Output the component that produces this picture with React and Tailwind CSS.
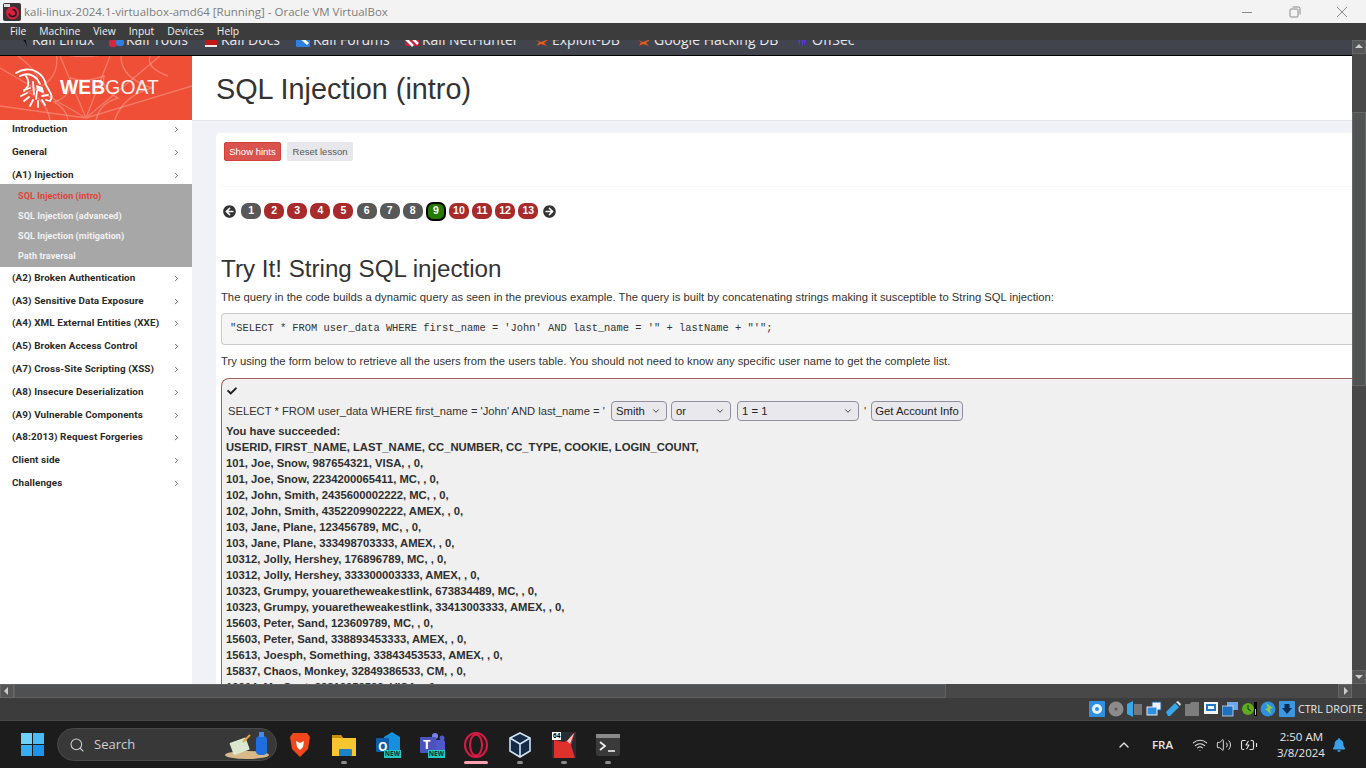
import { ChevronRight, ChevronDown, ChevronUp, Search, Wifi, Volume2, BatteryCharging } from 'lucide-react';
import { FaArrowCircleLeft, FaArrowCircleRight, FaCheck, FaBell } from 'react-icons/fa';

const menus = ['File', 'Machine', 'View', 'Input', 'Devices', 'Help'];

const bookmarks = [
  { label: 'Kali Linux', width: 94, kind: 'dragon' },
  { label: 'Kali Tools', width: 95, kind: 'tools' },
  { label: 'Kali Docs', width: 92, kind: 'docs' },
  { label: 'Kali Forums', width: 109, kind: 'forums' },
  { label: 'Kali NetHunter', width: 130, kind: 'hunter' },
  { label: 'Exploit-DB', width: 102, kind: 'spider' },
  { label: 'Google Hacking DB', width: 158, kind: 'spider' },
  { label: 'OffSec', width: 70, kind: 'offsec' },
];

const groupsBefore = ['Introduction', 'General', '(A1) Injection'];
const subItems = ['SQL Injection (intro)', 'SQL Injection (advanced)', 'SQL Injection (mitigation)', 'Path traversal'];
const groupsAfter = [
  '(A2) Broken Authentication',
  '(A3) Sensitive Data Exposure',
  '(A4) XML External Entities (XXE)',
  '(A5) Broken Access Control',
  '(A7) Cross-Site Scripting (XSS)',
  '(A8) Insecure Deserialization',
  '(A9) Vulnerable Components',
  '(A8:2013) Request Forgeries',
  'Client side',
  'Challenges',
];

const pages = [
  { n: 1, kind: 'grey' }, { n: 2, kind: 'red' }, { n: 3, kind: 'red' }, { n: 4, kind: 'red' },
  { n: 5, kind: 'red' }, { n: 6, kind: 'grey' }, { n: 7, kind: 'grey' }, { n: 8, kind: 'grey' },
  { n: 9, kind: 'current' }, { n: 10, kind: 'red' }, { n: 11, kind: 'red' }, { n: 12, kind: 'red' }, { n: 13, kind: 'red' },
];

const results = [
  '101, Joe, Snow, 987654321, VISA, , 0,',
  '101, Joe, Snow, 2234200065411, MC, , 0,',
  '102, John, Smith, 2435600002222, MC, , 0,',
  '102, John, Smith, 4352209902222, AMEX, , 0,',
  '103, Jane, Plane, 123456789, MC, , 0,',
  '103, Jane, Plane, 333498703333, AMEX, , 0,',
  '10312, Jolly, Hershey, 176896789, MC, , 0,',
  '10312, Jolly, Hershey, 333300003333, AMEX, , 0,',
  '10323, Grumpy, youaretheweakestlink, 673834489, MC, , 0,',
  '10323, Grumpy, youaretheweakestlink, 33413003333, AMEX, , 0,',
  '15603, Peter, Sand, 123609789, MC, , 0,',
  '15603, Peter, Sand, 338893453333, AMEX, , 0,',
  '15613, Joesph, Something, 33843453533, AMEX, , 0,',
  '15837, Chaos, Monkey, 32849386533, CM, , 0,',
  '19204, Mr, Goat, 33812953533, VISA, , 0,',
];

function VboxLogo() {
  return (
    <svg width="18" height="18" viewBox="0 0 18 18">
      <rect width="18" height="18" rx="2" fill="#3a3236" />
      <circle cx="9.5" cy="10" r="6.5" fill="#d8203f" />
      <path d="M9.5 6.5a3.5 3.5 0 1 1-3.4 4.2" fill="none" stroke="#1c1c1c" strokeWidth="1.6" />
      <rect x="1" y="1" width="6" height="3" fill="#ddd" />
    </svg>
  );
}

function WindowButtons() {
  return (
    <div className="ml-auto flex items-center text-[#8a8a8a]">
      <svg width="12" height="12" viewBox="0 0 12 12" className="mr-[36px]"><path d="M1 6.5h10" stroke="currentColor" /></svg>
      <svg width="12" height="12" viewBox="0 0 12 12" className="mr-[35px]">
        <rect x="1" y="3" width="8" height="8" rx="1" fill="none" stroke="currentColor" />
        <path d="M3.5 1h6a1.5 1.5 0 0 1 1.5 1.5v6" fill="none" stroke="currentColor" />
      </svg>
      <svg width="12" height="12" viewBox="0 0 12 12" className="mr-[18px]"><path d="M1 1l10 10M11 1L1 11" stroke="currentColor" /></svg>
    </div>
  );
}

// only the lower half of these shows, the menu bar covers the rest
function BookmarkIcon({ kind }) {
  return (
    <svg width="16" height="16" viewBox="0 0 16 16" className="shrink-0">
      {kind === 'dragon' && <path d="M1 6c5-2 9-1 11 3l1 6-2-5c-2-3-5-4-10-4z" fill="#0b0b0b" />}
      {kind === 'tools' && (
        <>
          <rect x="1" y="7" width="8" height="8" rx="3" fill="#d7263d" />
          <rect x="8" y="7" width="8" height="7" rx="3" fill="#2f80e0" />
        </>
      )}
      {kind === 'docs' && (
        <>
          <rect x="2" y="1" width="12" height="13" fill="#c01818" />
          <rect x="2" y="13" width="12" height="2" fill="#e8e8e8" />
        </>
      )}
      {kind === 'forums' && (
        <>
          <rect x="1" y="2" width="14" height="13" rx="1" fill="#2f80e0" />
          <path d="M3 3l10 9" stroke="#fff" strokeWidth="3" />
        </>
      )}
      {kind === 'hunter' && (
        <>
          <rect x="1" y="2" width="14" height="12" fill="#c8203a" />
          <path d="M1 6l8 8M6 4l8 8" stroke="#fff" strokeWidth="2.5" />
        </>
      )}
      {kind === 'spider' && <path d="M1 8l6 2 8-3-5 4 3 3-6-2-4 2 2-4z" fill="#e8591a" />}
      {kind === 'offsec' && <path d="M3 6l3 8V4zM7 6l1.5 9L10 6zM13 6l-3 8V4z" fill="#5536e0" />}
    </svg>
  );
}

function WebgoatBanner() {
  return (
    <div className="relative flex h-[64px] w-[192px] shrink-0 items-center overflow-hidden bg-[#ef4e37]">
      <svg width="192" height="64" viewBox="0 0 192 64" className="absolute inset-0" fill="none" stroke="#f9a596" strokeOpacity="0.5" strokeWidth="1.4">
        <path d="M86 62L60 0M86 62L110 0M86 62L0 12M86 62L160 0M86 62L192 30M86 62L0 50" />
        <path d="M70 22q16 5 34-2q-3 14 14 22q-18 5-22 22M70 22q3 18-16 24q12 6 14 18" />
        <path d="M56 -4q28 10 66-2q-6 26 30 38q-30 8-38 34M56 -4q6 30-28 40q18 8 22 28" />
        <path d="M18 0q18 14 20 22M150 0q-4 12 18 20" />
      </svg>
      <svg width="40" height="42" viewBox="0 0 40 42" className="relative ml-[15px]" fill="none" stroke="#fff" strokeWidth="1.8" strokeLinecap="round" strokeLinejoin="round">
        <path d="M1 6C7 2 16 1 22 5c5 3 8 8 9 13l5 9c1 3 1 5-1 7l-4-1" />
        <path d="M5 9c6-3 12-2 17 3l3 5" />
        <path d="M11 9c2 3 3 6 2 10l-4 5" />
        <path d="M15 21l-6 2M12 26l-6 3M14 30l-5 4M18 33l-3 6M23 34v6M27 33l3 5" />
        <path d="M18 15l1 12M22 24l-1 8" />
        <path d="M22 19l5 2 1 4-5-2z" fill="#fff" />
        <path d="M27 29l6-1" />
      </svg>
      <span className="relative ml-[5px] font-['Liberation_Sans',sans-serif] text-[19.3px] leading-none text-white">
        <span className="font-bold">WEB</span>
        <span className="font-light opacity-90">GOAT</span>
      </span>
    </div>
  );
}

function Sidebar() {
  const group = label => (
    <div key={label} className="flex h-[22.8px] items-center justify-between pl-3 pr-[11px] text-[9.9px] font-bold text-[#2b2b2b]">
      <span>{label}</span>
      <ChevronRight size={9} strokeWidth={2} className="text-[#444]" />
    </div>
  );
  return (
    <aside className="flex w-[192px] shrink-0 flex-col bg-white font-['Roboto','Liberation_Sans',sans-serif] tracking-[0.1px]">
      <WebgoatBanner />
      <div className="-mt-[1.5px]">
        {groupsBefore.map(group)}
        <div className="-mt-[2.5px] flex h-[82.5px] flex-col justify-center bg-[#a7a7a7] pl-[18px] pt-[2px] text-[9px] font-bold text-[#f2f2f2]">
          {subItems.map((item, i) => (
            <div key={item} className={`flex h-[20.4px] items-center ${i === 0 ? 'text-[#e0433b]' : ''}`}>{item}</div>
          ))}
        </div>
        {groupsAfter.map(group)}
      </div>
    </aside>
  );
}

function Pager() {
  return (
    <div className="flex h-[20px] items-center gap-[3.1px]">
      <FaArrowCircleLeft size={13} className="mr-[2px] text-[#333]" />
      {pages.map(p => (
        <div
          key={p.n}
          className={`flex w-[20px] items-center justify-center rounded-[7px] text-[10.5px] font-bold text-white ${
            p.kind === 'grey' ? 'h-[16px] bg-[#585858]' : p.kind === 'red' ? 'h-[16px] bg-[#a82a2a]' : 'h-[19px] border-2 border-black bg-[#267a00]'
          }`}
        >
          {p.n}
        </div>
      ))}
      <FaArrowCircleRight size={13} className="ml-[2px] text-[#333]" />
    </div>
  );
}

function NativeSelect({ value, width }) {
  return (
    <div
      className="flex h-[20px] items-center justify-between rounded-[4px] border border-[#8f8f9d] bg-[#e9e9ed] pl-[4px] pr-[5px] text-[#222]"
      style={{ width }}
    >
      <span>{value}</span>
      <ChevronDown size={10} strokeWidth={2} />
    </div>
  );
}

function AttackBox() {
  return (
    <div className="mt-[9px] rounded-tl-[8px] border border-r-0 border-b-0 border-[#a5605f] bg-[#f0f0f0] pl-[4px] text-[#2f2f2f]">
      <FaCheck size={10} className="ml-[1px] mt-[7px] text-[#222]" />
      <div className="ml-[2px] mt-[5px] flex h-[20px] items-center text-[11.3px] text-[#333]">
        <span className="w-[383px] shrink-0 whitespace-nowrap text-[11.2px]">SELECT * FROM user_data WHERE first_name = 'John' AND last_name = '</span>
        <NativeSelect value="Smith" width={56} />
        <div className="w-[4px]" />
        <NativeSelect value="or" width={60} />
        <div className="w-[6px]" />
        <NativeSelect value="1 = 1" width={122} />
        <span className="ml-[5px] w-[7px]">'</span>
        <div className="flex h-[20px] w-[92px] items-center justify-center rounded-[4px] border border-[#8f8f9d] bg-[#e9e9ed] text-[#222]">Get Account Info</div>
      </div>
      <div className="mt-[2px] text-[11.25px] font-bold leading-[16px]">
        <div>You have succeeded:</div>
        <div>USERID, FIRST_NAME, LAST_NAME, CC_NUMBER, CC_TYPE, COOKIE, LOGIN_COUNT,</div>
        {results.map(r => <div key={r}>{r}</div>)}
      </div>
    </div>
  );
}

function Lesson() {
  return (
    <main className="min-w-0 flex-1 overflow-hidden bg-[#f1f2f8] font-['Liberation_Sans',sans-serif]">
      <header className="flex h-[65px] items-center border-b border-[#e6e6ea] bg-white pl-[24px] pt-[3px] text-[28.8px] text-[#333]">
        SQL Injection (intro)
      </header>
      <div className="ml-[24px] mt-[12px] rounded-tl-[4px] bg-white pl-[5px] pb-10">
        <div className="flex gap-[6px] pl-[3px] pt-[9px] text-[9.5px]">
          <div className="flex h-[19px] w-[57px] items-center justify-center rounded-[2px] border border-[#d43f3a] bg-[#d9534f] pt-px text-white">Show hints</div>
          <div className="flex h-[19px] w-[66px] items-center justify-center rounded-[2px] bg-[#e8e8ec] pt-px text-[#555]">Reset lesson</div>
        </div>
        <div className="mt-[25px] h-px bg-[#f8f8f8]" />
        <div className="mt-[14px] pl-[2px]"><Pager /></div>
        <h1 className="mt-[32px] text-[24.2px] leading-[32px] text-[#333]">Try It! String SQL injection</h1>
        <p className="mt-[4px] text-[11.25px] leading-[16px] text-[#333]">
          The query in the code builds a dynamic query as seen in the previous example. The query is built by concatenating strings making it susceptible to String SQL injection:
        </p>
        <pre className="mt-[8px] flex h-[32px] items-center rounded-l-[4px] border border-r-0 border-[#ccc] bg-[#f5f5f5] pl-[8px] font-['Liberation_Mono',monospace] text-[10.4px] text-[#333]">
          "SELECT * FROM user_data WHERE first_name = 'John' AND last_name = '" + lastName + "'";
        </pre>
        <p className="mt-[8px] text-[11.25px] leading-[16px] text-[#333]">
          Try using the form below to retrieve all the users from the users table. You should not need to know any specific user name to get the complete list.
        </p>
        <AttackBox />
      </div>
    </main>
  );
}

function ScrollArrow({ dir }) {
  const d = { up: 'M3 8l4-4 4 4z', down: 'M3 5l4 4 4-4z', left: 'M8 3L4 7l4 4z', right: 'M6 3l4 4-4 4z' }[dir];
  return (
    <div className="flex h-[14px] w-[14px] shrink-0 items-center justify-center border border-[#666] bg-[#555]">
      <svg width="14" height="14" viewBox="0 0 14 14" className="shrink-0"><path d={d} fill="#ccc" /></svg>
    </div>
  );
}

function StatusIcons() {
  return (
    <div className="ml-auto flex items-center gap-[3px]">
      <svg width="16" height="16" viewBox="0 0 16 16"><rect width="16" height="16" rx="1" fill="#2f8fe0" /><circle cx="8" cy="8" r="5" fill="#e6f2fb" /><circle cx="8" cy="8" r="2" fill="#2f8fe0" /></svg>
      <svg width="16" height="16" viewBox="0 0 16 16"><circle cx="8" cy="8" r="7.5" fill="#8b8b8b" /><circle cx="8" cy="8" r="1.5" fill="#5a5a5a" /></svg>
      <svg width="16" height="16" viewBox="0 0 16 16"><path d="M0 3l6-3v16l-6-3z" fill="#39a7e8" /><rect x="7" y="3" width="8" height="11" fill="#777" /></svg>
      <svg width="16" height="16" viewBox="0 0 16 16"><rect x="6" y="1" width="9" height="8" fill="#f2f2f2" stroke="#1d5fa8" /><rect x="1" y="6" width="10" height="8" fill="#2f8fe0" stroke="#eee" /></svg>
      <svg width="16" height="16" viewBox="0 0 16 16"><path d="M1 11L10 2l4 4-9 9H3z" fill="#3aa6ea" /><path d="M11 1l2-1 3 3-1 2z" fill="#ddd" /></svg>
      <svg width="16" height="16" viewBox="0 0 16 16"><path d="M1 3h5l1-2h8v14H1z" fill="#7d7d7d" /></svg>
      <svg width="16" height="16" viewBox="0 0 16 16"><rect x="1" y="1" width="14" height="12" fill="#f3f3f3" /><rect x="3" y="3" width="10" height="7" fill="#1e78c8" /><rect x="5" y="5" width="6" height="3" fill="#f3f3f3" /></svg>
      <svg width="16" height="16" viewBox="0 0 16 16"><rect x="5" y="1" width="11" height="8" fill="#6fa8e8" /><rect x="0" y="5" width="11" height="10" fill="#1e70c0" stroke="#eee" strokeWidth="0.7" /></svg>
      <svg width="16" height="16" viewBox="0 0 16 16"><circle cx="7" cy="8" r="6" fill="#5faa1e" /><path d="M7 4v4l3 2" stroke="#14330a" fill="none" /><rect x="13" y="1" width="3" height="14" fill="#000" /><rect x="14" y="8" width="1" height="6" fill="#7dff00" /></svg>
      <svg width="16" height="16" viewBox="0 0 16 16"><circle cx="8" cy="8" r="7.5" fill="#2f8fe0" /><path d="M6 2l7 5-3 1 1 5-6-5 3-1z" fill="#8ccf3a" /></svg>
      <svg width="16" height="16" viewBox="0 0 16 16"><rect width="16" height="16" rx="1" fill="#3a97e0" /><path d="M5.5 3h5v4H13l-5 6-5-6h2.5z" fill="#0d2c55" /></svg>
      <span className="w-[68px] whitespace-nowrap font-['Open_Sans',sans-serif] text-[10.7px] text-[#e8e8e8]">CTRL DROITE</span>
    </div>
  );
}

function Taskbar() {
  const apps = [
    {
      key: 'brave',
      dot: false,
      icon: <svg width="22" height="26" viewBox="0 0 22 26"><path d="M4 1h14l3 4-2 12-8 8-8-8L1 5z" fill="#f1471d" /><path d="M7 9l4 2 4-2-1 6-3 3-3-3z" fill="#fff" /></svg>,
    },
    {
      key: 'files',
      dot: true,
      icon: <svg width="26" height="24" viewBox="0 0 26 24"><path d="M1 2h9l2 3h13v18H1z" fill="#f7c52e" /><path d="M1 2h9l2 3H1z" fill="#c98f10" /><rect x="8" y="16" width="13" height="7" rx="1" fill="#1c82c9" /></svg>,
    },
    {
      key: 'outlook',
      dot: false,
      icon: (
        <div className="relative h-[26px] w-[26px]">
          <svg width="26" height="26" viewBox="0 0 26 26"><path d="M9 5l8-5 8 5v16H9z" fill="#1490df" /><rect x="1" y="6" width="13" height="14" rx="1" fill="#0f5ca8" /></svg>
          <span className="absolute left-[3px] top-[6px] text-[12px] font-bold text-white">O</span>
          <span className="absolute bottom-0 right-0 bg-[#23c9c4] px-[1px] text-[6.5px] font-bold leading-[8px] text-[#10302f]">NEW</span>
        </div>
      ),
    },
    {
      key: 'teams',
      dot: false,
      icon: (
        <div className="relative h-[26px] w-[26px]">
          <svg width="26" height="26" viewBox="0 0 26 26"><circle cx="16" cy="4" r="3" fill="#7b83eb" /><circle cx="23" cy="6" r="2.5" fill="#5059c9" /><rect x="14" y="8" width="12" height="13" rx="2" fill="#5059c9" /><rect x="1" y="5" width="16" height="16" rx="1" fill="#4b53bc" /></svg>
          <span className="absolute left-[4px] top-[4px] text-[13px] font-bold leading-[16px] text-white">T</span>
          <span className="absolute bottom-0 right-0 bg-[#23c9c4] px-[1px] text-[6.5px] font-bold leading-[8px] text-[#10302f]">NEW</span>
        </div>
      ),
    },
    {
      key: 'opera',
      active: true,
      icon: <svg width="26" height="26" viewBox="0 0 26 26" fill="none" stroke="#d81b45" strokeWidth="2"><ellipse cx="13" cy="13" rx="11" ry="12" /><ellipse cx="13" cy="13" rx="6" ry="10.5" /></svg>,
    },
    {
      key: 'vbox',
      dot: true,
      icon: <svg width="24" height="26" viewBox="0 0 24 26"><path d="M12 1l10 5v13l-10 6-10-6V6z" fill="#152a45" stroke="#cfe3f5" strokeWidth="1.6" /><path d="M12 12L2 6M12 12l10-6M12 12v13" stroke="#cfe3f5" strokeWidth="1.6" /></svg>,
    },
    {
      key: 'cards',
      dot: true,
      icon: (
        <div className="relative h-[26px] w-[24px]">
          <svg width="24" height="26" viewBox="0 0 24 26"><rect width="24" height="26" fill="#2b2b33" /><path d="M2 8l10 2 4-2 7-8-4 13 4 13H2z" fill="#e0302c" /><path d="M15 9l7-8-4 11z" fill="#f6c9c4" /></svg>
          <span className="absolute left-0 top-0 bg-white px-[1px] text-[6.5px] font-bold leading-[8px] text-black">64</span>
        </div>
      ),
    },
    {
      key: 'terminal',
      dot: true,
      icon: <svg width="24" height="22" viewBox="0 0 24 22"><rect width="24" height="22" rx="2" fill="#3a3a3a" /><rect width="24" height="4" fill="#8a8a8a" /><path d="M4 8l5 4-5 4" stroke="#eee" strokeWidth="1.8" fill="none" /><path d="M12 17h7" stroke="#eee" strokeWidth="1.6" /></svg>,
    },
  ];

  return (
    <footer className="flex h-[48px] items-center border-t border-[#474747] bg-[#1c1c1c] font-['Open_Sans',sans-serif] text-[#e6e6e6]">
      <div className="ml-[21px] grid h-[23px] w-[23px] grid-cols-2 gap-px">
        <div className="bg-[#6fd2fb]" />
        <div className="bg-[#49bcf7]" />
        <div className="bg-[#35aef5]" />
        <div className="bg-[#1c94ee]" />
      </div>
      <div className="ml-[13px] flex h-[33px] w-[220px] items-center rounded-full border border-[#4a4a4a] bg-[#383838] pl-[11px] text-[13px] text-[#cfcfcf]">
        <Search size={16} strokeWidth={1.6} />
        <span className="ml-[9px]">Search</span>
        <svg width="48" height="30" viewBox="0 0 48 30" className="ml-auto mr-[5px]">
          <ellipse cx="24" cy="25" rx="22" ry="4" fill="#d8b98a" />
          <rect x="8" y="10" width="17" height="13" rx="1" fill="#dbe8cf" transform="rotate(-20 16 16)" />
          <path d="M20 12l7-7" stroke="#e8a53a" strokeWidth="2" />
          <rect x="33" y="6" width="11" height="19" rx="4" fill="#1e6ee0" />
          <rect x="36" y="2" width="5" height="5" fill="#3d8df0" />
        </svg>
      </div>
      <div className="ml-[1px] flex items-center">
        {apps.map(app => (
          <div key={app.key} className="relative flex h-[48px] w-[44px] items-center justify-center">
            {app.icon}
            {app.dot && <span className="absolute bottom-[5px] h-[3px] w-[6px] rounded-full bg-[#8c8c8c]" />}
            {app.active && <span className="absolute bottom-[5px] h-[3px] w-[24px] rounded-full bg-[#ffa0b0]" />}
          </div>
        ))}
      </div>
      <ChevronUp size={16} strokeWidth={2} className="ml-auto" />
      <span className="ml-[20px] text-[11.5px] font-semibold">FRA</span>
      <Wifi size={16} strokeWidth={1.6} className="ml-[19px]" />
      <Volume2 size={16} strokeWidth={1.4} className="ml-[8px]" />
      <BatteryCharging size={18} strokeWidth={1.5} className="ml-[8px]" />
      <div className="ml-[19px] w-[46px] whitespace-nowrap text-right text-[11.5px] leading-[16px]">
        <div>2:50 AM</div>
        <div>3/8/2024</div>
      </div>
      <FaBell size={14} className="ml-[9px] mr-[20px] text-[#3aa0ea]" />
    </footer>
  );
}

export default function App() {
  return (
    <div className="flex h-[768px] w-[1366px] flex-col overflow-hidden">
      <div className="flex h-[23px] shrink-0 items-center bg-[#f3f3f3] pl-[3px]">
        <VboxLogo />
        <span className="ml-[3px] font-['Open_Sans',sans-serif] text-[11.5px] text-[#7c7c7c]">kali-linux-2024.1-virtualbox-amd64 [Running] - Oracle VM VirtualBox</span>
        <WindowButtons />
      </div>
      <nav className="relative z-10 flex h-[17px] shrink-0 items-center gap-[13px] bg-[#3c3c3c] pl-[10px] font-['Open_Sans',sans-serif] text-[10.3px] text-[#f0f0f0]">
        {menus.map(m => <span key={m}>{m}</span>)}
      </nav>
      <div className="flex h-[644px] shrink-0">
        <div className="flex w-[1352px] flex-col">
          <div className="flex h-[16px] shrink-0 border-b border-black bg-[#42444d] pl-[14px] font-['Open_Sans',sans-serif] text-[14px] leading-[18px] text-[#e8e8e8]">
            {bookmarks.map(b => (
              <div key={b.label} className="-mt-[9px] flex h-[18px] shrink-0 items-center gap-[2px] self-start" style={{ width: b.width }}>
                <BookmarkIcon kind={b.kind} />
                <span className="whitespace-nowrap">{b.label}</span>
              </div>
            ))}
          </div>
          <div className="flex h-[628px] overflow-hidden">
            <Sidebar />
            <Lesson />
          </div>
        </div>
        <div className="relative z-10 flex w-[14px] flex-col bg-[#484848]">
          <ScrollArrow dir="up" />
          <div className="mt-[58px] h-[274px] border border-[#666] bg-[#525454]" />
          <div className="flex-1" />
          <ScrollArrow dir="down" />
        </div>
      </div>
      <div className="flex h-[14px] shrink-0 bg-[#484848]">
        <ScrollArrow dir="left" />
        <div className="h-full w-[932px] border border-[#606060] bg-[#4e5052]" />
        <div className="flex-1" />
        <ScrollArrow dir="right" />
        <div className="w-[14px]" />
      </div>
      <div className="flex h-[22px] shrink-0 items-center bg-[#3c3c3c] pt-[1px]">
        <StatusIcons />
      </div>
      <Taskbar />
    </div>
  );
}
